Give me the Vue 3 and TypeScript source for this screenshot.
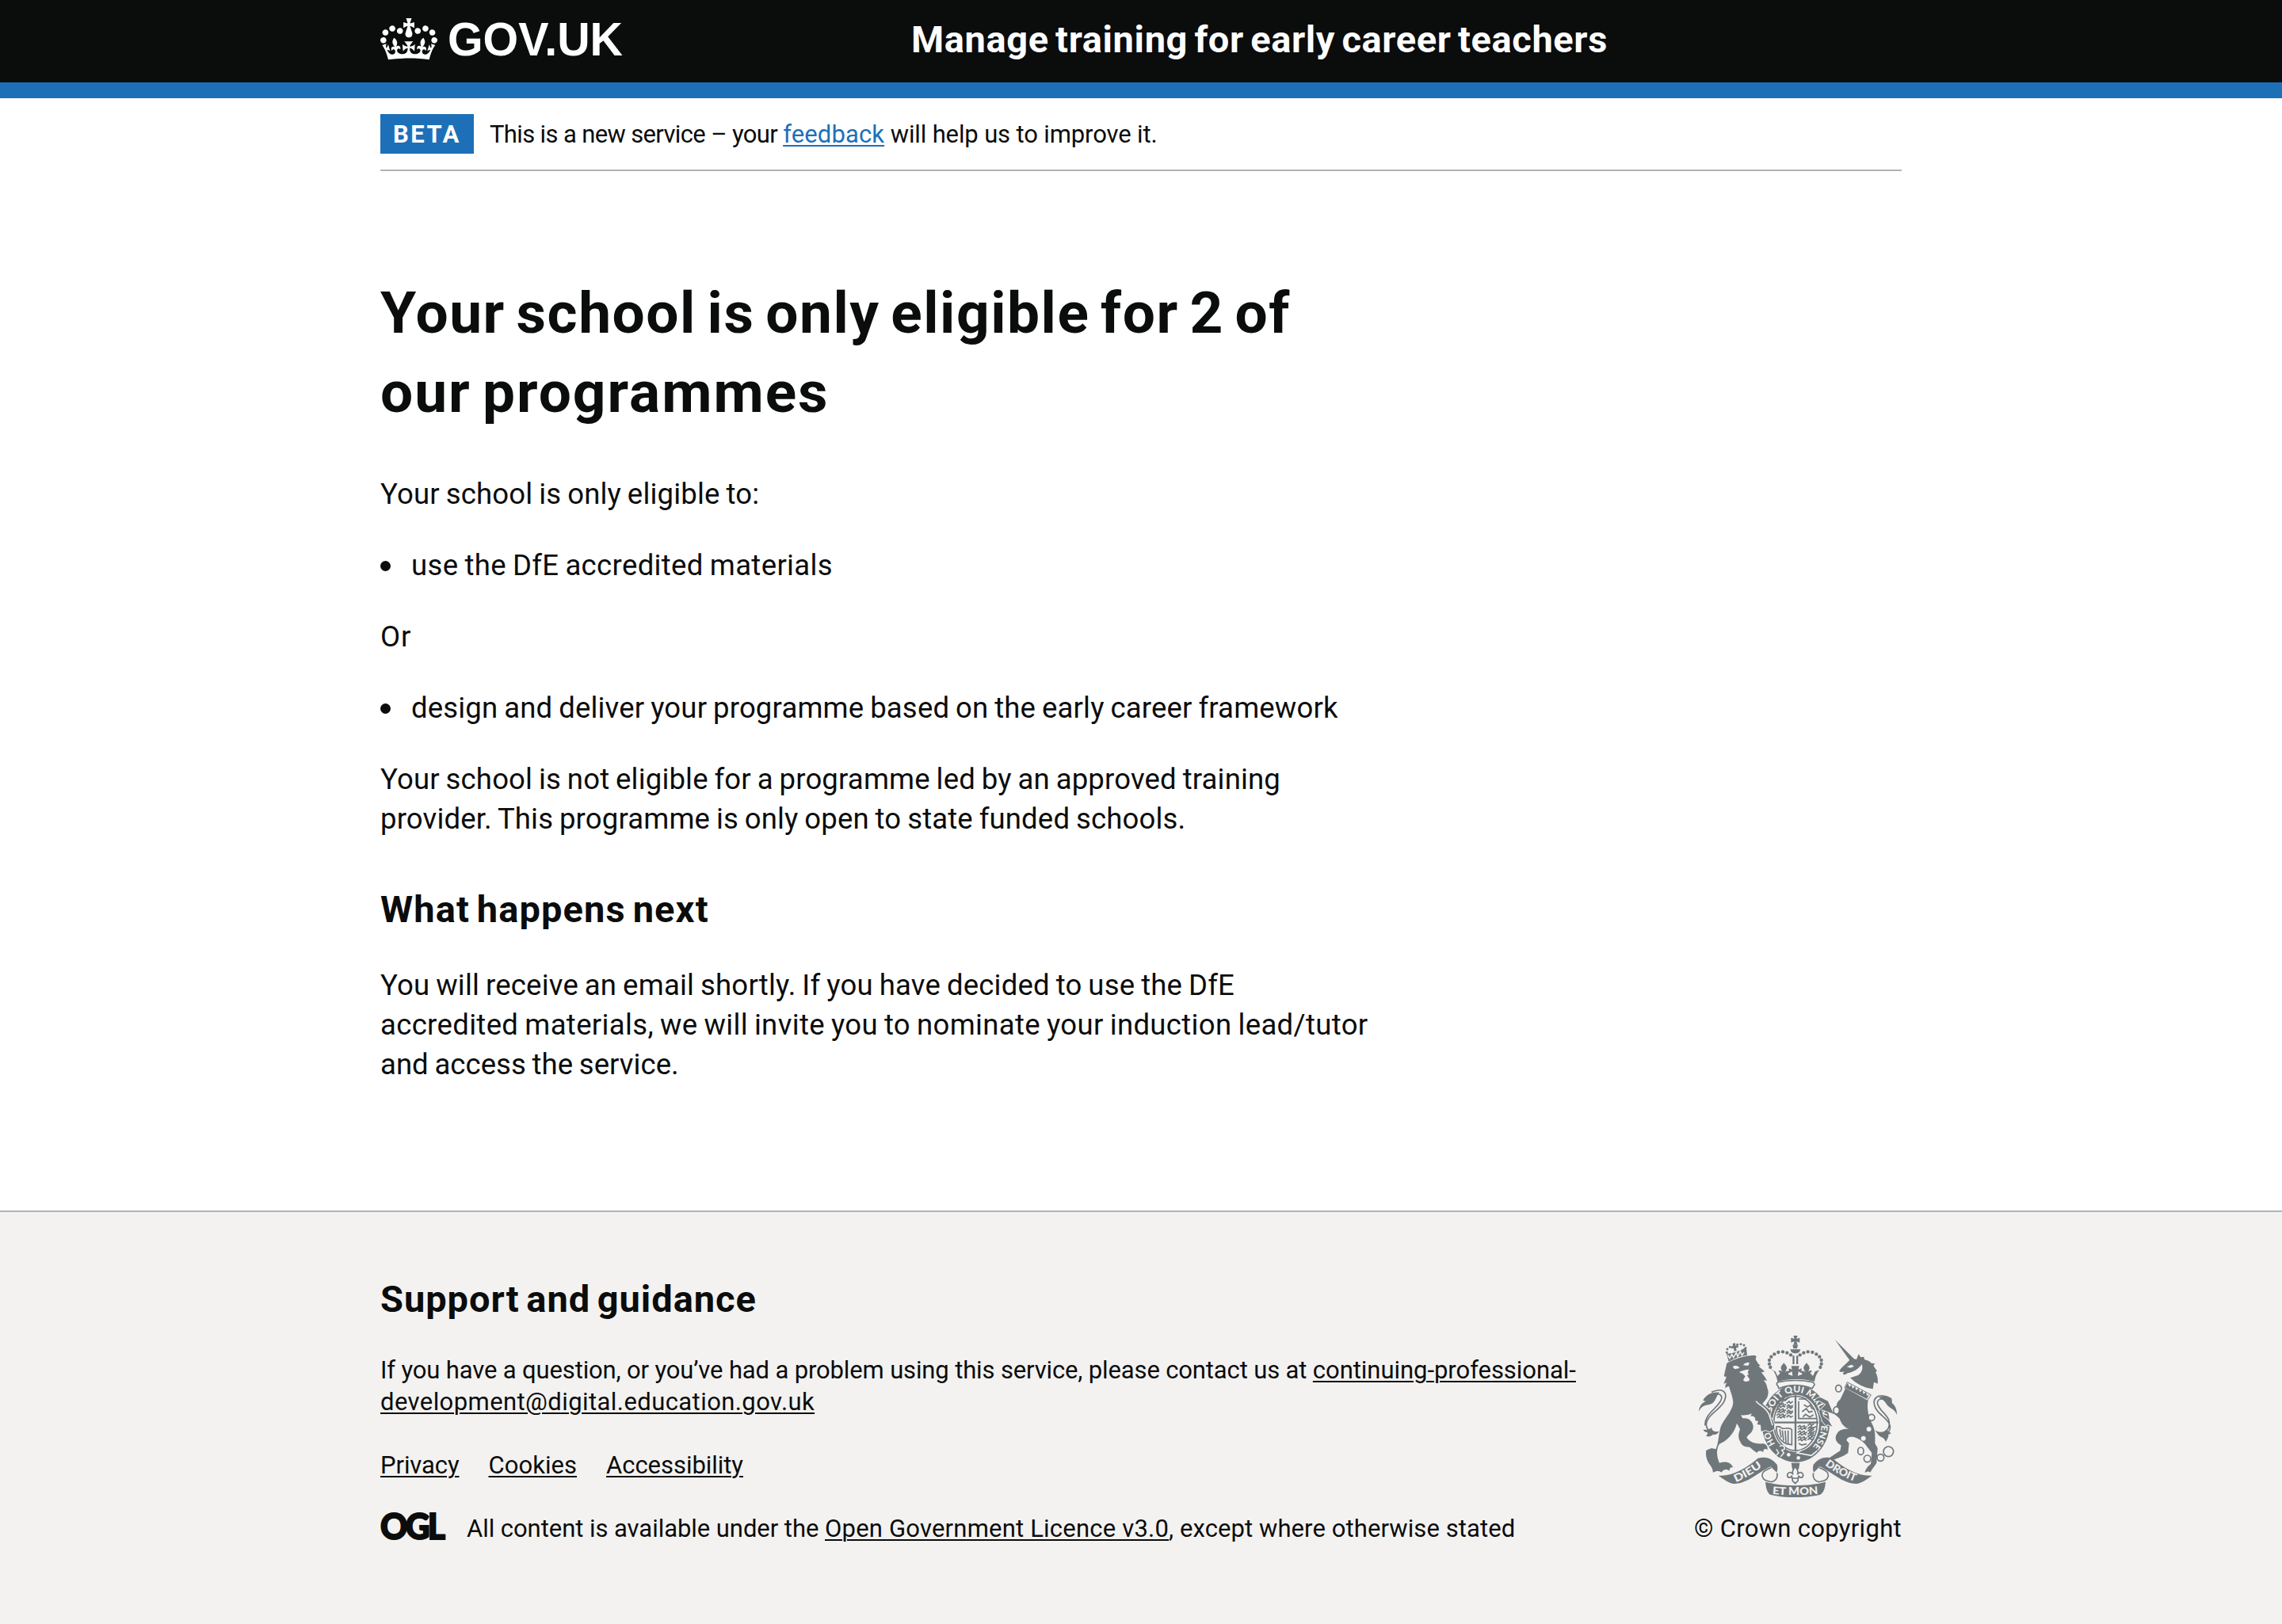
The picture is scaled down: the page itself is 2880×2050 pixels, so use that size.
<script setup lang="ts">
interface Run {
  text: string
  tracking: number
  href?: string
}
type Line = Run[]

const track = (run: Run) => ({ letterSpacing: `${run.tracking}px` })

const serviceName: Run = { text: 'Manage training for early career teachers', tracking: 0.63 }
const phaseTag: Run = { text: 'BETA', tracking: 2.5 }
const phaseLine: Line = [
  { text: 'This is a new service – your ', tracking: -0.64 },
  { text: 'feedback', tracking: 0.13, href: '#feedback' },
  { text: ' will help us to improve it.', tracking: -0.13 },
]

const heading: Line = [
  { text: 'Your school is only eligible for 2 of', tracking: 1.54 },
  { text: 'our programmes', tracking: 2.0 },
]
const intro: Run = { text: 'Your school is only eligible to:', tracking: 0.19 }
const firstOption: Run = { text: 'use the DfE accredited materials', tracking: 0.36 }
const or: Run = { text: 'Or', tracking: 0.8 }
const secondOption: Run = {
  text: 'design and deliver your programme based on the early career framework',
  tracking: 0.18,
}
const notEligible: Line = [
  { text: 'Your school is not eligible for a programme led by an approved training', tracking: 0.17 },
  { text: 'provider. This programme is only open to state funded schools.', tracking: 0.16 },
]
const nextHeading: Run = { text: 'What happens next', tracking: 1.12 }
const nextSteps: Line = [
  { text: 'You will receive an email shortly. If you have decided to use the DfE', tracking: 0.21 },
  { text: 'accredited materials, we will invite you to nominate your induction lead/tutor', tracking: 0.35 },
  { text: 'and access the service.', tracking: 0.05 },
]

const supportHeading: Run = { text: 'Support and guidance', tracking: 0.96 }
const supportLines: Line[] = [
  [
    {
      text: 'If you have a question, or you’ve had a problem using this service, please contact us at ',
      tracking: -0.14,
    },
    { text: 'continuing-professional-', tracking: -0.04, href: '#contact' },
  ],
  [{ text: 'development@digital.education.gov.uk', tracking: 0.42, href: '#contact' }],
]
const footerLinks: Line = [
  { text: 'Privacy', tracking: -0.09, href: '#privacy' },
  { text: 'Cookies', tracking: 0.04, href: '#cookies' },
  { text: 'Accessibility', tracking: -0.04, href: '#accessibility' },
]
const licence: Line = [
  { text: 'All content is available under the ', tracking: -0.05 },
  { text: 'Open Government Licence v3.0', tracking: 0.2, href: '#licence' },
  { text: ', except where otherwise stated', tracking: 0.09 },
]
const copyright: Run = { text: '© Crown copyright', tracking: 0.31 }

/* Pearls along the left arch of the royal crown; the right arch mirrors them. */
const pearls: [number, number][] = [
  [420, 121], [406, 113], [390, 109], [373, 111], [358, 118],
  [346, 128], [339, 141], [339, 155], [343, 168],
]
/* Heraldic lions: small marks on the first and fourth quarters of the shield. */
const lions: [number, number][] = [
  [366, 310], [366, 330], [366, 350], [446, 394], [446, 415], [446, 436],
]
</script>

<template>
  <div class="page">
    <header class="header">
      <div class="container header-row">
        <svg class="logo" viewBox="0 0 310 104" role="img" aria-label="GOV.UK">
          <g transform="translate(0 23) scale(.5455)" fill="#fff">
            <path d="M25 30.2c3.5 1.5 7.7-.2 9.1-3.7 1.5-3.6-.2-7.8-3.9-9.2-3.6-1.4-7.6.3-9.1 3.9-1.4 3.5.3 7.5 3.9 9zM9 39.5c3.6 1.5 7.8-.2 9.2-3.7 1.5-3.6-.2-7.8-3.9-9.1-3.6-1.5-7.6.2-9.1 3.8-1.4 3.5.3 7.5 3.8 9zM4.4 57.2c3.5 1.5 7.7-.2 9.1-3.8 1.5-3.6-.2-7.7-3.9-9.1-3.5-1.5-7.6.3-9.1 3.8-1.4 3.5.3 7.6 3.9 9.1zm38.3-21.4c3.5 1.5 7.7-.2 9.1-3.8 1.5-3.6-.2-7.7-3.9-9.1-3.6-1.5-7.6.3-9.1 3.8-1.3 3.6.4 7.7 3.9 9.1zm64.4-5.6c-3.6 1.5-7.8-.2-9.1-3.7-1.5-3.6.2-7.8 3.8-9.2 3.6-1.4 7.7.3 9.2 3.9 1.3 3.5-.4 7.5-3.9 9zm15.9 9.3c-3.6 1.5-7.7-.2-9.1-3.7-1.5-3.6.2-7.8 3.7-9.1 3.6-1.5 7.7.2 9.2 3.8 1.5 3.5-.3 7.5-3.8 9zm4.7 17.7c-3.6 1.5-7.8-.2-9.2-3.8-1.5-3.6.2-7.7 3.9-9.1 3.6-1.5 7.7.3 9.2 3.8 1.3 3.5-.4 7.6-3.9 9.1zM89.3 35.8c-3.6 1.5-7.8-.2-9.2-3.8-1.4-3.6.2-7.7 3.9-9.1 3.6-1.5 7.7.3 9.2 3.8 1.4 3.6-.3 7.7-3.9 9.1zM69.7 17.7l8.9 4.7V9.3l-8.9 2.8c-.2-.3-.5-.6-.9-.9L72.4 0H59.6l3.5 11.2c-.3.3-.6.5-.9.9l-8.8-2.8v13.1l8.8-4.7c.3.3.6.7.9.9l-5 15.4v.1c-.2.8-.4 1.6-.4 2.4 0 4.1 3.1 7.5 7 8.1h.2c.3 0 .7.1 1 .1.4 0 .7 0 1-.1h.2c4-.6 7.1-4.1 7.1-8.1 0-.8-.1-1.7-.4-2.4V34l-5.1-15.4c.4-.2.7-.6 1-.9zM66 92.8c16.9 0 32.8 1.1 47.1 3.2 4-16.9 8.9-26.7 14-33.5l-9.6-3.4c1 4.9 1.1 7.2 0 10.2-1.5-1.4-3-4.3-4.2-8.7L108.6 76c2.8-2 5-3.2 7.5-3.3-4.4 9.4-10 11.9-13.6 11.2-4.3-.8-6.3-4.6-5.6-7.9 1-4.7 5.7-5.9 8-.5 4.3-8.7-3-11.4-7.6-8.8 7.1-7.2 7.9-13.5 2.1-21.1-8 6.1-8.1 12.3-4.5 20.8-4.7-5.4-12.1-2.5-9.5 6.2 3.4-5.2 7.9-2 7.2 3.1-.6 4.3-6.4 7.8-13.5 7.2-10.3-.9-10.9-8-11.2-13.8 2.5-.5 7.1 1.8 11 7.3L80.2 60c-4.1 4.4-8 5.3-12.3 5.4 1.4-4.4 8-11.6 8-11.6H55.5s6.4 7.2 7.9 11.6c-4.2-.1-8-1-12.3-5.4l1.4 16.4c3.9-5.5 8.5-7.7 10.9-7.3-.3 5.8-.9 12.8-11.1 13.8-7.2.6-12.9-2.9-13.5-7.2-.7-5 3.8-8.3 7.1-3.1 2.7-8.7-4.6-11.6-9.4-6.2 3.7-8.5 3.6-14.7-4.6-20.8-5.8 7.6-5 13.9 2.2 21.1-4.7-2.6-11.9.1-7.7 8.8 2.3-5.5 7.1-4.2 8.1.5.7 3.3-1.3 7.1-5.7 7.9-3.5.7-9-1.8-13.5-11.2 2.5.1 4.7 1.3 7.5 3.3l-4.7-15.4c-1.2 4.4-2.7 7.2-4.3 8.7-1.1-3-.9-5.3 0-10.2l-9.5 3.4c5 6.9 9.9 16.7 14 33.5 14.8-2.1 30.8-3.2 47.7-3.2z" />
          </g>
          <text class="wordmark" x="85" y="70" textLength="221" lengthAdjust="spacingAndGlyphs">GOV.UK</text>
        </svg>
        <span class="service" :style="track(serviceName)">{{ serviceName.text }}</span>
      </div>
    </header>

    <div class="container">
      <div class="phase">
        <strong class="tag" :style="track(phaseTag)">{{ phaseTag.text }}</strong>
        <span class="phase-text">
          <component :is="r.href ? 'a' : 'span'" v-for="r in phaseLine" :key="r.text" :href="r.href" :style="track(r)">{{ r.text }}</component>
        </span>
      </div>
      <main class="main">
        <h1><span v-for="r in heading" :key="r.text" class="line" :style="track(r)">{{ r.text }}</span></h1>
        <p :style="track(intro)">{{ intro.text }}</p>
        <ul><li :style="track(firstOption)">{{ firstOption.text }}</li></ul>
        <p :style="track(or)">{{ or.text }}</p>
        <ul><li :style="track(secondOption)">{{ secondOption.text }}</li></ul>
        <p><span v-for="r in notEligible" :key="r.text" class="line" :style="track(r)">{{ r.text }}</span></p>
        <h2 :style="track(nextHeading)">{{ nextHeading.text }}</h2>
        <p><span v-for="r in nextSteps" :key="r.text" class="line" :style="track(r)">{{ r.text }}</span></p>
      </main>
    </div>

    <footer class="footer">
      <div class="container footer-row">
        <div class="footer-main">
          <h2 class="support" :style="track(supportHeading)">{{ supportHeading.text }}</h2>
          <p>
            <span v-for="(l, i) in supportLines" :key="i" class="line">
              <component :is="r.href ? 'a' : 'span'" v-for="r in l" :key="r.text" :href="r.href" :style="track(r)">{{ r.text }}</component>
            </span>
          </p>
          <nav class="links">
            <a v-for="r in footerLinks" :key="r.text" :href="r.href" :style="track(r)">{{ r.text }}</a>
          </nav>
          <div class="licence">
            <svg class="ogl" viewBox="0 0 84 36" role="img" aria-label="Open Government Licence">
              <text x="0" y="33" textLength="79" lengthAdjust="spacingAndGlyphs">OGL</text>
            </svg>
            <span class="licence-text">
              <component :is="r.href ? 'a' : 'span'" v-for="r in licence" :key="r.text" :href="r.href" :style="track(r)">{{ r.text }}</component>
            </span>
          </div>
        </div>
        <div class="crest">
          <svg class="arms" viewBox="72 48 750 612" aria-hidden="true">
            <defs>
              <path id="garter" d="M346 340A98 118 0 1 1 493 478" />
              <path id="garter-tail" d="M361 458A98 118 0 0 1 339 390" />
              <path id="scroll-left" d="M212 603Q262 582 318 541" />
              <path id="scroll-right" d="M549 538Q602 578 668 602" />
              <path id="scroll-mid" d="M350 648Q437 656 526 647" />
            </defs>

            <!-- royal crown -->
            <g class="ink">
              <path d="M430 48h16l-4 12 12-4v18l-12-4 4 13h-16l4-13-13 4V56l13 4z" />
              <path d="M427 83h20l-3 14h-14zM418 100a20 20 0 0 0 39 0zM427 124h7v32h-7zM441 124h7v32h-7z" />
              <circle v-for="(p, i) in pearls" :key="`l${i}`" :cx="p[0]" :cy="p[1]" r="6.5" />
              <circle v-for="(p, i) in pearls" :key="`r${i}`" :cx="875 - p[0]" :cy="p[1]" r="6.5" />
              <path d="M346 178l16 6 8 17 10-11-7-8c8-5 15 0 17 7l-7-16c-2-8 5-14 11-22 6 8 13 14 11 22l-7 16c4-8 11-10 17-4l-5 9 17 6-2-16-12 6v-18l12 4-3-13h30l-3 13 12-4v18l-12-6-2 16 17-6-5-9c6-6 13-4 17 4l-7-16c-2-8 5-14 11-22 6 8 13 14 11 22l-7 16c2-7 9-12 17-7l-7 8 10 11 8-17 16-6c-10 14-16 28-18 44-44-12-96-12-140 0-3-18-9-31-18-44z" />
            </g>

            <!-- garter and shield -->
            <path class="ink" fill-rule="evenodd" d="M439 235c70 0 128 65 128 146s-58 146-128 146-128-65-128-146 58-146 128-146zm0 37c-49 0-89 48-89 108s40 108 89 108 89-48 89-108-40-108-89-108z" />
            <path class="outline" d="M372 224q66-13 131 0 12 8 3 16l-5 8q-64-24-126 0l-4-10q-9-8 1-14z" />
            <ellipse class="outline" cx="438" cy="380" rx="82" ry="103" />
            <path class="stroke" d="M438 274v212M351 377h174" />
            <g class="marks">
              <path v-for="(l, i) in lions" :key="i" :d="`M${l[0]} ${l[1]}l9-6 4 7 12-6 3 8 8-5M${l[0] + 2} ${l[1] + 9}l8-5 6 6 8-6 9 5M${l[0] + 38} ${l[1] - 5}l10-8 5 7 9-7M${l[0] + 38} ${l[1] + 7}l8-7 8 7 8-5`" />
              <path d="M382 296l12-8 5 6 14-13M450 288h30M450 296v66h66M470 310l14 8 10-7 5 12 12 4M463 336l16-12 10 14 14-4M466 356l10-10 16 10 14-8" />
              <path d="M366 393c-2 28 12 54 38 65l20 3V404c-10-12-28 0-38-6-7-5-13-8-20-5zM378 402l6 32M388 406l5 40M399 408l3 46M410 407v51" />
              <path d="M494 390l10 8 12-6M490 408l10 8 12-6M484 428l10 8 10-6M450 456l12 6 18-4" />
            </g>
            <path class="ink" d="M360 470c20-20 46-6 42 12-3 14-18 20-28 27-7-8-15-20-14-39z" />
            <path class="halo" d="M378 468c9-8 22 0 18 10l-10 4 8 10-12 14M366 478l8 14-8 8" />
            <circle class="paper" cx="412" cy="499" r="7" />
            <circle class="paper" cx="449" cy="511" r="7" />
            <path class="halo" d="M460 482l-16 10 54 10 22-18" />
            <text class="motto ring">
              <textPath href="#garter-tail" textLength="50" lengthAdjust="spacingAndGlyphs">HO</textPath>
              <textPath href="#garter" textLength="396" lengthAdjust="spacingAndGlyphs">SOIT QUI MAL Y PENSE</textPath>
            </text>

            <!-- lion supporter -->
            <g class="ink">
              <path class="edged" d="M178 152c30-16 62-28 104-30l8 4-3 12c6 10 10 18 18 24l-7 2 24 20-13 3c10 14 17 22 21 32l-13-3c8 10 13 19 14 30 6 12 5 28-2 40l-16 20 32 28-4 20c14 15 20 32 15 49l-16 9-14-6-18 4-2-24-13-2 4-12-12-3c4-12-6-18-18-16l6-10c-16 6-28 8-42 6l7 12c22-4 40 12 40 32 0 22-18 28-25 40 12 22 40 26 64 24 12 4 16 10 15 24-8-8-16-4-16 8-10-6-20-6-24 3-12-8-20-16-28-22-20 0-30-6-36-22-10-16-4-34 0-46l-12-22c-10 40-38 66-66 78-12 18-12 44 0 72 22-8 44-4 52 18-8-3-14 0-14 12-10-8-24-6-30 6-10-8-20-6-32 0-2-12-4-18-10-26-14-16-20-40-16-58l20-8 16 4c12-22 10-60 20-88 14-30 44-56 46-90-2-22-10-40-16-60-6 0-10 4-14 6 0-8 2-14 6-20l-12 4c4-10 8-16 10-26l-9-2z" />
              <path d="M185 146l-8-30c12 4 64-14 74-26l4 32c-24 2-48 12-70 24z" />
              <circle v-for="(p, i) in [[178, 112], [180, 99], [190, 91], [218, 82], [231, 80], [243, 84], [249, 95]]" :key="i" :cx="p[0]" :cy="p[1]" r="4.5" />
              <path d="M200 78l10-2 1 10 9-2 2 9-9 1 2 11-9 2-2-11-9 1-2-8 8-2z" />
            </g>
            <path class="paper" d="M200 166c8-6 22-5 26 5l-18 4zM240 160c6-10 16-12 24-9l-5 11zM224 186c14-6 24-10 38-10l-5 10 4 10-7 2 10 14c2 10-20 14-24 4l8-14-10-10z" />
            <path class="halo" d="M288 296c16 18 36 22 49 48l14 44M182 122l7 12 8-15 6 12 11-19 5 15 10-20 6 15 8-10" />
            <path class="tail" d="M120 262c40-18 62-2 50 30-10 34-68 54-70 92 0 16 10 26 28 28M112 280c40-22 54-6 42 16-14 28-62 52-58 92" />
            <path class="ink" d="M72 335c2-22 12-32 26-38l-10-4c10-20 32-34 62-30-12 12-14 36-32 44-12 6-32 0-46 28zM88 404c12 0 22 2 32-8 2 14 12 18 28 14-4 12-16 14-22 12-10 8-16 10-26 6 4-6 6-8 4-14-8 0-12-4-16-10z" />

            <!-- unicorn supporter -->
            <g class="ink">
              <path d="M587 63l78 78-14 11zM603 182c10-16 26-26 40-42 8-4 16-4 26-2l8-20 8 12 12-2 2 10c12 4 22 8 26 14l14 2-6 8 14 20-6 4c8 14 10 30 8 44l-14-6-4 26c-34-4-60-18-86-42l30-10c14-10 20-26 14-42-10 16-30 30-54 34-6 6-14 8-18 2l6-8-12 2z" />
              <path class="edged" d="M627 248c28 14 58 30 86 44-6 36 2 62 14 88 16 30 12 54 12 76l10 18-4 56c-10 16-18 24-24 36-6-6-14-4-20 2 0-14 12-26 22-34l4-42-26-34c-14-14-28-22-42-26-16-2-24 0-28 12l10 12-4 36c-20 16-46 22-66 30l-14 14c-8 4-20 4-32 8 6-14 16-20 30-26l52-34 4-20c-20-12-28-28-14-48 8-12 26-16 44-14-20-8-30-22-36-40l-18-16-50-18 6 26 20 14 14 24-18-8-4 6-14-16-14-40 26-26-26-14-16 4c4-14 14-18 26-14l24 12 18 42c6 0 10-8 14-14 0-16 2-26 14-34z" />
            </g>
            <path class="paper" d="M632 166l18-8 10 6-14 6z" />
            <circle class="paper" cx="716" cy="402" r="9" />
            <circle class="paper" cx="695" cy="437" r="9" />
            <circle class="paper" cx="584" cy="272" r="7" />
            <path class="collar" d="M634 224l90 48-14 22-86-48z" />
            <path class="ink" d="M628 240l8-12 6 14 8-8 4 14 10-8 3 15 11-8 3 15 11-8 3 15 10-7 4 14 8-6-9 18-80-42z" />
            <g class="outline">
              <ellipse cx="601" cy="248" rx="11" ry="13" />
              <ellipse cx="593" cy="331" rx="11" ry="14" />
              <circle cx="726" cy="358" r="12" />
              <ellipse cx="685" cy="485" rx="11" ry="14" />
              <circle cx="710" cy="514" r="13" />
              <circle cx="760" cy="510" r="13" />
              <circle cx="790" cy="487" r="19" />
            </g>
            <path class="tail" d="M786 280c-36-14-58 6-48 34 10 36 50 42 58 76 2 20-10 34-30 34M778 290c-24-8-34 6-28 20 8 24 34 34 42 60 4 24-4 36-16 42" />
            <path class="ink" d="M822 348c0-24-8-36-18-44l-2-18c-14-12-30-12-50-4 18 6 26 18 34 30 12 14 26 12 36 36zM738 404c14 14 36 10 44 0l18 14c-4 4-8 4-10 2 2 10-4 20-10 30-4-10-10-16-22-20-8-8-14-16-20-26z" />

            <!-- motto scroll -->
            <path class="ink" d="M146 578c54 4 108-30 150-66 30-8 52 0 72 24 4 14 2 24-2 30l-22-22c-44 18-86 66-140 65-22-4-36-16-58-31zM728 578c-54 4-108-30-150-66-30-8-52 0-72 24-4 14-2 24 2 30l22-22c44 18 86 66 140 65 22-4 36-16 58-31z" />
            <path class="ink" d="M324 602c70 18 158 18 228 0-2 22-6 38-20 48-60 14-130 14-190 0-12-10-16-26-18-48z" />
            <path class="outline" d="M346 548c-20 10-36 14-34 32 4 18 22 18 36 22 14-4 24-14 20-34M528 548c20 10 36 14 34 32-4 18-22 18-36 22-14-4-24-14-20-34" />
            <path class="ink" d="M422 530h32l-4 24h-24z" />
            <path class="outline" d="M437 544c-8 12-14 20-8 30-8-14-22-8-22 4 2 12 16 8 16 0 4 8 4 12 4 20l10 10 10-10c0-8 0-12 4-20 0 8 14 12 16 0 0-12-14-18-22-4 6-10 0-18-8-30zM423 588h28" />
            <text class="motto scroll"><textPath href="#scroll-left" textLength="116" lengthAdjust="spacingAndGlyphs">DIEU</textPath></text>
            <text class="motto scroll"><textPath href="#scroll-right" textLength="130" lengthAdjust="spacingAndGlyphs">DROIT</textPath></text>
            <text class="motto scroll"><textPath href="#scroll-mid" textLength="174" lengthAdjust="spacingAndGlyphs">ET MON</textPath></text>
          </svg>
          <span class="copyright" :style="track(copyright)">{{ copyright.text }}</span>
        </div>
      </div>
    </footer>
  </div>
</template>

<style>
body {
  background: #fff;
}
</style>

<style scoped>
.page {
  display: flex;
  flex-direction: column;
  min-height: 2050px;
  color: #0b0c0c;
  font-family: Roboto, "Noto Sans", sans-serif;
  white-space: pre;
}
.container {
  width: 1920px;
  margin: 0 auto;
}
h1, h2, p, ul {
  margin: 0;
  padding: 0;
}
.line {
  display: block;
  white-space: normal;
}
.line > * {
  white-space: pre;
}
.header {
  background: #0b0c0c;
  border-bottom: 20px solid #1d70b8;
}
.header-row {
  display: flex;
  height: 104px;
}
.logo {
  width: 310px;
  height: 104px;
  margin-right: 360px;
  overflow: visible;
}
.wordmark {
  fill: #fff;
  font: 700 60px "Liberation Sans", Arial, sans-serif;
}
.service {
  padding-top: 20px;
  color: #fff;
  font-size: 47px;
  font-weight: 700;
  line-height: 60px;
  word-spacing: -4px;
}
.phase {
  display: flex;
  gap: 20px;
  padding: 20px 0;
  border-bottom: 2px solid #b1b4b6;
  height: 50px;
  font-size: 31px;
  line-height: 52px;
}
.tag {
  box-sizing: border-box;
  width: 118px;
  height: 50px;
  padding-left: 16px;
  background: #1d70b8;
  color: #fff;
  font-weight: 700;
}
.phase-text,
.licence-text {
  display: flex;
}
a {
  color: #0b0c0c;
  text-decoration: underline;
  text-decoration-thickness: 2px;
  text-underline-offset: 3px;
}
.phase a {
  color: #1d70b8;
}
.main {
  padding: 129px 0 159px;
  font-size: 36.5px;
  line-height: 50px;
  word-spacing: -1.4px;
}
h1 {
  margin-bottom: 54px;
  font-size: 73px;
  font-weight: 700;
  line-height: 100px;
  word-spacing: -6px;
}
h2 {
  font-size: 47px;
  font-weight: 700;
  line-height: 60px;
  word-spacing: -4px;
}
.main p + ul,
.main ul + p {
  margin-top: 40px;
}
.main h2 {
  margin: 59px 0 41px;
}
ul {
  list-style: none;
}
li {
  display: flex;
  align-items: center;
  gap: 26px;
}
li::before {
  content: "";
  width: 13px;
  height: 13px;
  border-radius: 50%;
  background: #0b0c0c;
}
.footer {
  flex: 1;
  background: #f3f2f1;
  border-top: 2px solid #b1b4b6;
  font-size: 31px;
  line-height: 40px;
}
.footer-row {
  display: flex;
  justify-content: space-between;
  align-items: flex-end;
  padding-top: 80px;
}
.support {
  margin-bottom: 40px;
}
.links {
  display: flex;
  gap: 37px;
  margin: 40px 0;
}
.licence {
  display: flex;
  gap: 25px;
}
.ogl {
  width: 84px;
  height: 36px;
  overflow: visible;
}
.ogl text {
  fill: #0b0c0c;
  stroke: #0b0c0c;
  stroke-width: 2px;
  font: 900 45px Lato, sans-serif;
  letter-spacing: -3px;
}
.crest {
  display: flex;
  flex-direction: column;
  align-items: center;
  gap: 20px;
  width: 262px;
}
.arms {
  width: 250px;
  height: 204px;
}
.ink {
  fill: #6f777b;
}
.edged {
  stroke: #f3f2f1;
  stroke-width: 5px;
  paint-order: stroke;
}
.paper {
  fill: #f3f2f1;
}
.outline {
  fill: #f3f2f1;
  stroke: #6f777b;
  stroke-width: 5px;
}
.stroke {
  fill: none;
  stroke: #6f777b;
  stroke-width: 7px;
}
.marks {
  fill: none;
  stroke: #6f777b;
  stroke-width: 5px;
}
.tail {
  fill: none;
  stroke: #6f777b;
  stroke-width: 5px;
}
.halo {
  fill: none;
  stroke: #f3f2f1;
  stroke-width: 4.5px;
}
.collar {
  fill: #f3f2f1;
  stroke: #6f777b;
  stroke-width: 3px;
}
.motto {
  fill: #f3f2f1;
  font: 900 34px Lato, sans-serif;
}
.scroll {
  font-size: 40px;
}
</style>
